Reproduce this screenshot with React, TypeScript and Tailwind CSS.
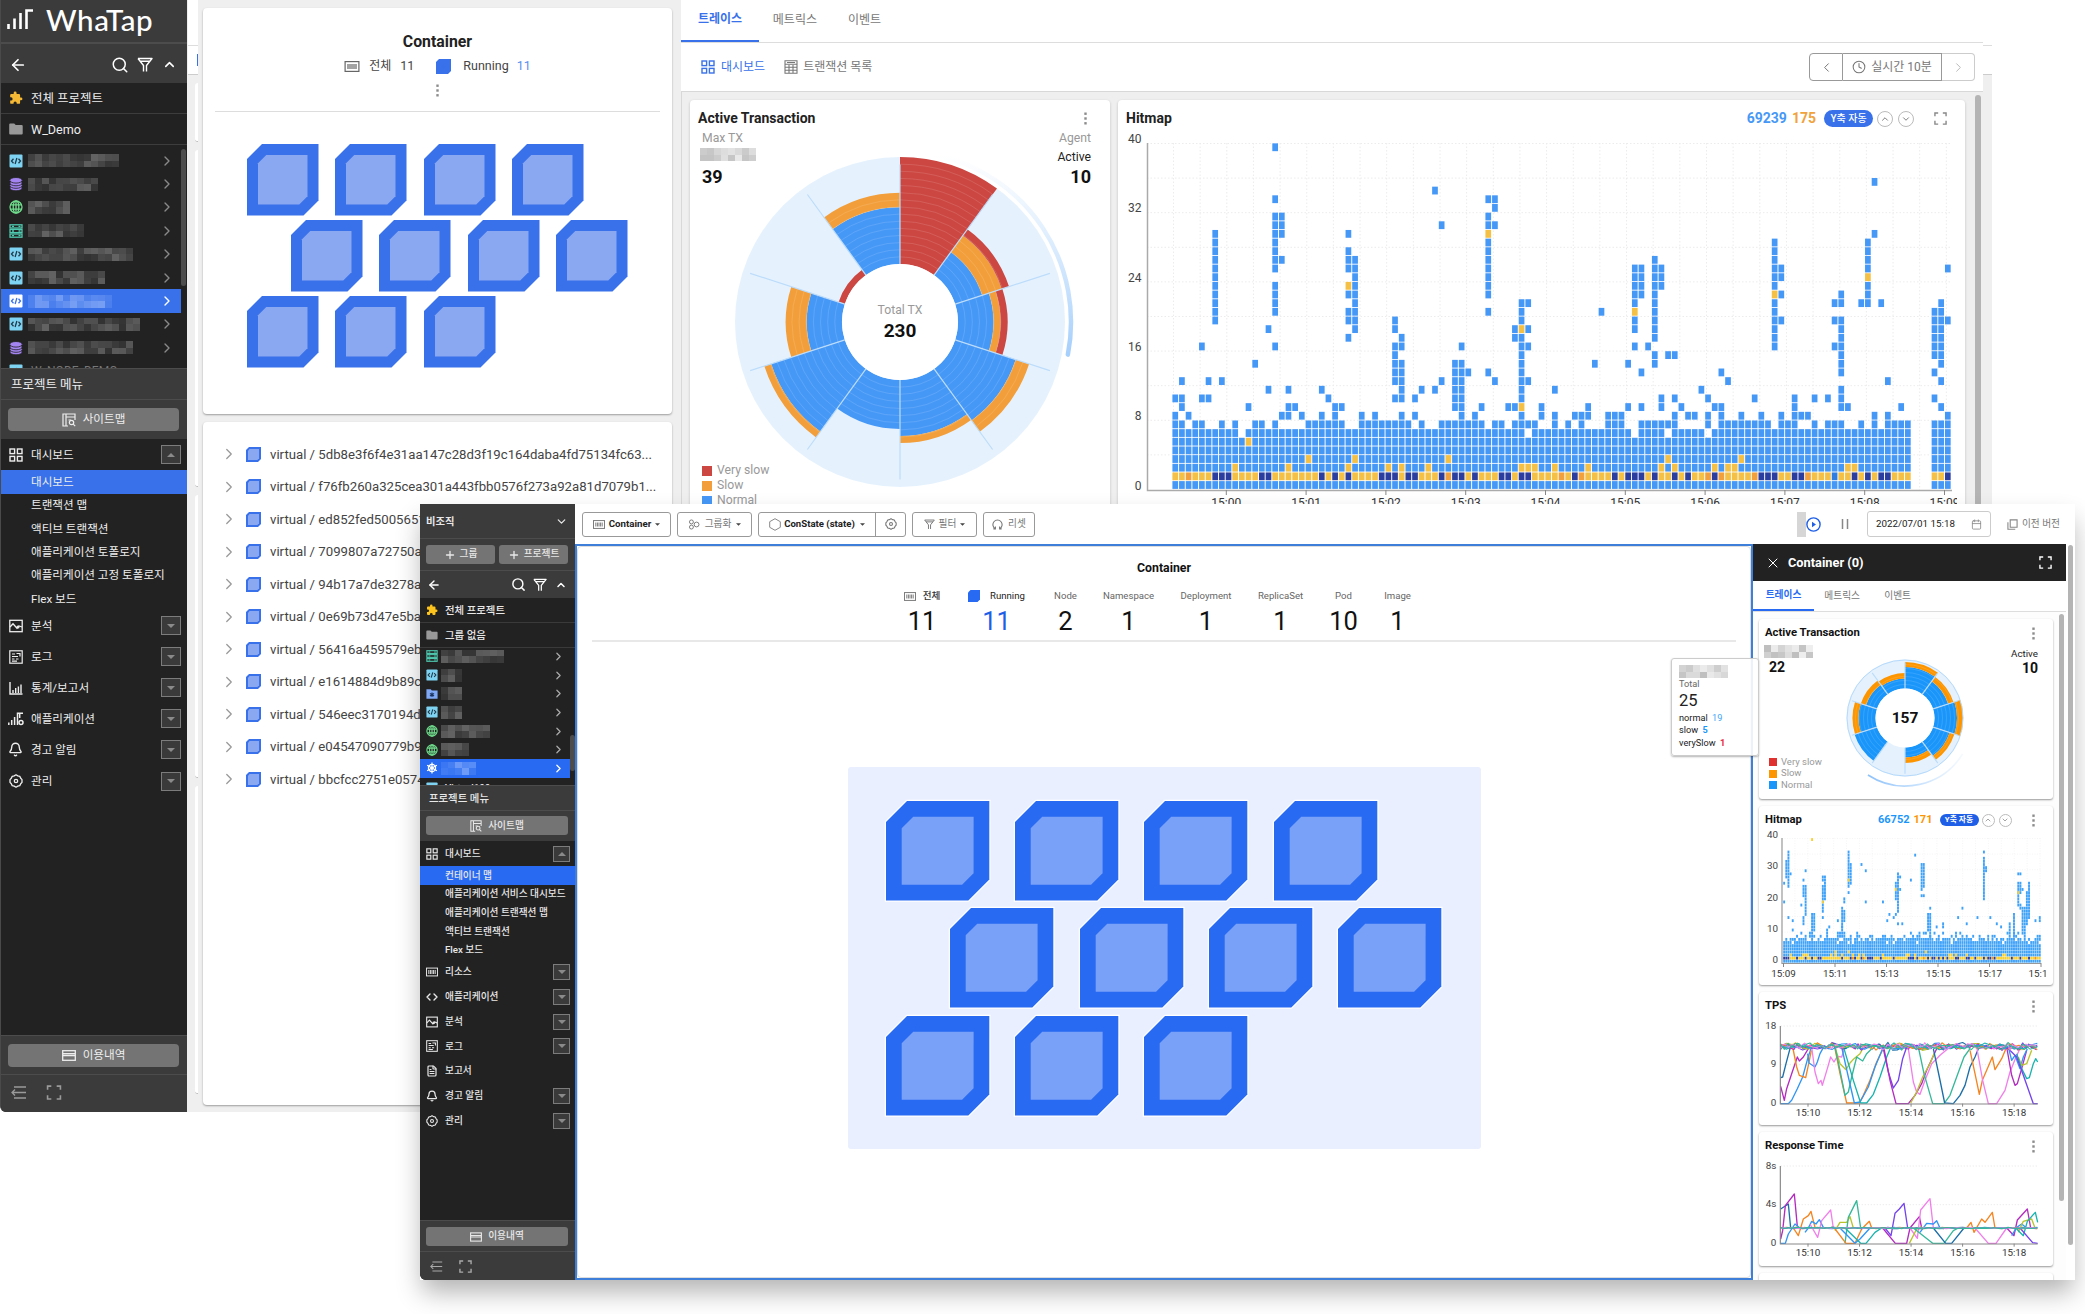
import React from "react";
import {
  ArrowLeft, Search, ChevronUp, ChevronDown, ChevronLeft, ChevronRight, Bell, Clock,
  Calendar, Plus, X, Code, FileText,
} from "lucide-react";

/* ---------- icons ---------- */

type IconProps = { className?: string };

const Funnel = ({ className }: IconProps) => (
  <svg className={className} viewBox="0 0 16 16" fill="none" stroke="currentColor" strokeWidth="1.4" strokeLinejoin="round">
    <path d="M1 1.500h14L9.500 8.500v6M6.500 14.500v-6L1 1.500M3 4.200h10" />
  </svg>
);
const Puzzle = ({ className }: IconProps) => (
  <svg className={className} viewBox="0 0 24 24" fill="currentColor">
    <path d="M20.5 11H19V7a2 2 0 0 0-2-2h-4V3.500a2.500 2.500 0 0 0-5 0V5H4a2 2 0 0 0-2 2v3.800h1.500a2.700 2.700 0 0 1 0 5.400H2V20a2 2 0 0 0 2 2h3.800v-1.500a2.700 2.700 0 0 1 5.400 0V22H17a2 2 0 0 0 2-2v-4h1.500a2.500 2.500 0 0 0 0-5z" />
  </svg>
);
const FolderSolid = ({ className }: IconProps) => (
  <svg className={className} viewBox="0 0 14 12" fill="currentColor">
    <path d="M1.200 0.500h4l1.500 1.500h6a1 1 0 0 1 1 1v7.500a1 1 0 0 1-1 1H1.200a1 1 0 0 1-1-1v-9a1 1 0 0 1 1-1z" />
  </svg>
);
const CodeBox = ({ className, color, ink }: IconProps & { color: string; ink: string }) => (
  <svg className={className} viewBox="0 0 14 14">
    <rect x="0.500" y="0.500" width="13" height="13" rx="1" fill={color} />
    <path d="M4.500 4.800L2.500 7l2 2.200M9.500 4.800l2 2.200-2 2.200M7.900 4L6.100 10" stroke={ink} strokeWidth="1.300" fill="none" />
  </svg>
);
const Database = ({ className }: IconProps) => (
  <svg className={className} viewBox="0 0 14 14">
    <g fill="#a384f0" stroke="#222" strokeWidth="0.800">
      <ellipse cx="7" cy="11" rx="6.200" ry="2.800" />
      <ellipse cx="7" cy="8.500" rx="6.200" ry="2.800" />
      <ellipse cx="7" cy="6" rx="6.200" ry="2.800" />
      <ellipse cx="7" cy="3.300" rx="6.200" ry="2.800" />
    </g>
  </svg>
);
const Globe = ({ className }: IconProps) => (
  <svg className={className} viewBox="0 0 14 14" fill="none" stroke="#6fdc8c" strokeWidth="1.300">
    <circle cx="7" cy="7" r="6" />
    <ellipse cx="7" cy="7" rx="2.800" ry="6" />
    <path d="M1.500 4.800h11M1.500 9.200h11M7 1v12" />
  </svg>
);
const Server = ({ className }: IconProps) => (
  <svg className={className} viewBox="0 0 14 14" fill="none" stroke="#4fc9b0" strokeWidth="1.300">
    <rect x="1" y="0.800" width="12" height="3.200" />
    <rect x="1" y="5.400" width="12" height="3.200" />
    <rect x="1" y="10" width="12" height="3.200" />
    <path d="M3 2.400h2M3 7h2M3 11.600h2M9.500 2.400h2M9.500 7h2M9.500 11.600h2" />
  </svg>
);
const FolderStar = ({ className }: IconProps) => (
  <svg className={className} viewBox="0 0 14 14">
    <path d="M0.500 1.500h5l1.300 1.500H13.500V12.500H0.500z" fill="#7fa8f5" />
    <path d="M7 5.200v5.400M4.600 6.500l4.800 2.800M9.400 6.500L4.600 9.300" stroke="#1c3460" strokeWidth="1.300" />
  </svg>
);
const Helm = ({ className }: IconProps) => (
  <svg className={className} viewBox="0 0 14 14" fill="none" stroke="#fff" strokeWidth="1.400">
    <circle cx="7" cy="7" r="4.200" />
    <path d="M7 0.500v13M1.300 3.700l11.400 6.600M12.700 3.700L1.300 10.300" />
    <circle cx="7" cy="7" r="1.200" fill="#fff" />
  </svg>
);
const Grid4 = ({ className }: IconProps) => (
  <svg className={className} viewBox="0 0 14 14" fill="none" stroke="currentColor" strokeWidth="1.400">
    <rect x="1" y="1" width="4.600" height="4.600" />
    <rect x="8.400" y="1" width="4.600" height="4.600" />
    <rect x="1" y="8.400" width="4.600" height="4.600" />
    <rect x="8.400" y="8.400" width="4.600" height="4.600" />
  </svg>
);
const TableIcon = ({ className }: IconProps) => (
  <svg className={className} viewBox="0 0 14 14" fill="none" stroke="currentColor" strokeWidth="1.100">
    <path d="M1 0.800h12v12.400H1zM1 4.300h12M3 2.500h8M1 7.300h12M1 10.200h12M5 5v8M9 5v8" />
  </svg>
);
const Analysis = ({ className }: IconProps) => (
  <svg className={className} viewBox="0 0 14 14" fill="none" stroke="currentColor" strokeWidth="1.300">
    <rect x="0.800" y="1.300" width="12.400" height="11.400" />
    <path d="M1 8l3-3.300 4 4.500 2-2.200 3 1" />
    <circle cx="9" cy="8" r="0.900" />
  </svg>
);
const LogIcon = ({ className }: IconProps) => (
  <svg className={className} viewBox="0 0 14 14" fill="none" stroke="currentColor" strokeWidth="1.200">
    <rect x="0.800" y="0.800" width="12.400" height="12.400" />
    <path d="M3 4h3M7.500 3.500h3.500v3M3 6.500h6M3 9h2.500M7 9h2.500M3 11.200h5" />
  </svg>
);
const StatsIcon = ({ className }: IconProps) => (
  <svg className={className} viewBox="0 0 14 14" fill="none" stroke="currentColor" strokeWidth="1.400">
    <path d="M1 1v12h12.500M4 12V9M6.700 12V7M9.400 12V5.500M12 12V3.500" />
  </svg>
);
const AppIcon = ({ className }: IconProps) => (
  <svg className={className} viewBox="0 0 16 14" fill="none" stroke="currentColor" strokeWidth="1.500">
    <path d="M0.800 13v-2.500M3.700 13V8M6.600 13V5M9.500 13V1.200H15M11.700 1v5" />
    <circle cx="13" cy="10.500" r="2" />
  </svg>
);
const HexGear = ({ className }: IconProps) => (
  <svg className={className} viewBox="0 0 14 14" fill="none" stroke="currentColor" strokeWidth="1.300" strokeLinejoin="round">
    <path d="M5.200 1.900L7 0.800l1.800 1.100 2 .5.900 1.800 1.300 1.400v2.800l-1.300 1.400-.9 1.800-2 .5L7 13.200l-1.800-1.100-2-.5-.9-1.800L1 8.400V5.600l1.300-1.400.9-1.800z" />
    <circle cx="7" cy="7" r="1.700" />
  </svg>
);
const ContainerIcon = ({ className }: IconProps) => (
  <svg className={className} viewBox="0 0 15 11" fill="none" stroke="currentColor" strokeWidth="1.200">
    <rect x="0.600" y="0.600" width="13.800" height="9.800" />
    <path d="M3.500 3v5M5.500 3v5M7.500 3v5M9.500 3v5M11.500 3v5" />
  </svg>
);
const SitemapIcon = ({ className }: IconProps) => (
  <svg className={className} viewBox="0 0 14 14" fill="none" stroke="currentColor" strokeWidth="1.200">
    <path d="M13 7V1H1v12h5M4 1v12M4 4h9M6.500 7H9" />
    <circle cx="9.500" cy="9.500" r="2.200" />
    <path d="M11.200 11.200l2 2" />
  </svg>
);
const CardIcon = ({ className }: IconProps) => (
  <svg className={className} viewBox="0 0 14 11" fill="none" stroke="currentColor" strokeWidth="1.300">
    <rect x="0.700" y="0.700" width="12.600" height="9.600" />
    <path d="M1 3.700h12M1 5.500h12" />
  </svg>
);
const Collapse = ({ className }: IconProps) => (
  <svg className={className} viewBox="0 0 16 13" fill="none" stroke="currentColor" strokeWidth="1.300">
    <path d="M3 1h12M1 6.500h14M3 12h12M4 3.500l-3 3 3 3" />
  </svg>
);
const Expand = ({ className }: IconProps) => (
  <svg className={className} viewBox="0 0 14 14" fill="none" stroke="currentColor" strokeWidth="1.500">
    <path d="M1 4.500V1h3.500M9.500 1H13v3.500M13 9.500V13H9.500M4.500 13H1V9.500" />
  </svg>
);
const GroupIcon = ({ className }: IconProps) => (
  <svg className={className} viewBox="0 0 14 12" fill="none" stroke="currentColor" strokeWidth="1.100">
    <circle cx="4" cy="3" r="2.300" />
    <circle cx="4" cy="9" r="2.300" />
    <circle cx="10" cy="6" r="2.800" />
  </svg>
);
const Dots = ({ className = "" }: IconProps) => (
  <svg className={`h-[13px] w-[3px] shrink-0 text-[#8c8c8c] ${className}`} viewBox="0 0 3 13" fill="currentColor">
    <rect y="0.500" x="0.300" width="2.400" height="2.400" />
    <rect y="5.300" x="0.300" width="2.400" height="2.400" />
    <rect y="10.100" x="0.300" width="2.400" height="2.400" />
  </svg>
);

/* ---------- shared pieces ---------- */

/* Label set slightly below the optical centre of its row */
const Low = ({ children }: { children: React.ReactNode }) => <span className="pt-[2px]">{children}</span>;

function Cube({ className, w, h, cut, inset, fill, inner, halo }: {
  className?: string; w: number; h: number; cut: number; inset: number; fill: string; inner: string; halo?: boolean;
}) {
  const c2 = cut * 0.55;
  const shape = (x: number, y: number, x2: number, y2: number, c: number) =>
    `M${x + c} ${y}H${x2}V${y2 - c}L${x2 - c} ${y2}H${x}V${y + c}Z`;
  return (
    <svg className={`shrink-0 ${className}`} viewBox={`0 0 ${w} ${h}`} overflow="visible">
      {halo && <path d={shape(0, 0, w, h, cut)} stroke="#fff" strokeWidth="2.500" fill="none" />}
      <path d={shape(0, 0, w, h, cut)} fill={fill} />
      <path d={shape(inset, inset, w - inset, h - inset, c2)} fill={inner} />
    </svg>
  );
}

const noise = (n: number) => {
  const v = Math.sin(n * 127.1 + 11.7) * 43758.5453;
  return v - Math.floor(v);
};

/* Pixelated placeholder for a redacted label */
function Mosaic({ cells, seed, tone }: { cells: number; seed: number; tone: "dark" | "blue" | "light" }) {
  const rgb = tone === "dark" ? "170,170,170" : tone === "blue" ? "190,210,255" : "120,120,120";
  return (
    <span className="grid grid-flow-col grid-rows-2 auto-cols-[7px]">
      {Array.from({ length: cells * 2 }, (_, i) => (
        <span
          key={i}
          className="h-[6.500px] w-[7px]"
          style={{ backgroundColor: `rgba(${rgb},${(0.12 + noise(i + seed * 31) * 0.36).toFixed(2)})` }}
        />
      ))}
    </span>
  );
}

function Toggle({ up, small }: { up?: boolean; small?: boolean }) {
  return (
    <span className={`flex items-center justify-center border border-[#7c7c7c] bg-[#3a3a3a] ${small ? "h-4 w-[17px]" : "h-[19px] w-5"}`}>
      <svg className="h-1 w-2" viewBox="0 0 8 4" fill="#8a8a8a">
        <path d={up ? "M0 4L4 0l4 4z" : "M0 0h8L4 4z"} />
      </svg>
    </span>
  );
}

const kindIcon: Record<string, React.ReactNode> = {
  code: <CodeBox className="h-full w-full" color="#7fd3f2" ink="#1f3a4a" />,
  codeSel: <CodeBox className="h-full w-full" color="#ffffff" ink="#3871ea" />,
  db: <Database className="h-full w-full" />,
  web: <Globe className="h-full w-full" />,
  server: <Server className="h-full w-full" />,
  folder: <FolderStar className="h-full w-full" />,
  helm: <Helm className="h-full w-full" />,
};

/* ---------- back window sidebar ---------- */

const backProjects: [string, number][] = [
  ["code", 13], ["db", 10], ["web", 6], ["server", 8], ["code", 15], ["code", 11], ["codeSel", 12], ["code", 16], ["db", 15],
];
const backMenu: [React.ReactNode, string][] = [
  [<Analysis className="h-[14px] w-[14px]" />, "분석"],
  [<LogIcon className="h-[14px] w-[14px]" />, "로그"],
  [<StatsIcon className="h-[14px] w-[14px]" />, "통계/보고서"],
  [<AppIcon className="h-[14px] w-4" />, "애플리케이션"],
  [<Bell className="h-[15px] w-[15px]" strokeWidth={2.200} />, "경고 알림"],
  [<HexGear className="h-[14px] w-[14px]" />, "관리"],
];

function BackSidebar() {
  return (
    <aside className="flex h-[1112px] w-[187px] shrink-0 flex-col overflow-hidden rounded-bl-md border-l border-[#4a4a4a] bg-[#222] text-[#eee]">
      <div className="flex h-[44px] shrink-0 items-center border-b-2 border-[#4c4c4c] bg-[#3b3b3b] pl-[6px]">
        <svg className="mt-[-4px] h-[20px] w-[26px] shrink-0" viewBox="0 0 26 20" fill="none" stroke="#fff" strokeWidth="2.600">
          <path d="M1.500 20v-5M7.500 20V9.500M13.500 20V4M19.500 20V1.500H26" />
        </svg>
        <span className="ml-[13px] mt-[-2px] font-[Lato] text-[29.500px] font-medium leading-none tracking-[0.600px] text-white">WhaTap</span>
      </div>
      <div className="flex h-[39px] shrink-0 items-center bg-[#3b3b3b] pl-[8px] pr-[10px] pt-[2px] text-white">
        <ArrowLeft className="h-[18px] w-[18px]" strokeWidth={2.300} />
        <Search className="ml-auto h-[18px] w-[18px]" />
        <Funnel className="ml-[8px] h-4 w-4" />
        <ChevronUp className="ml-[9px] h-[15px] w-[15px]" strokeWidth={2.500} />
      </div>
      <div className="flex h-[31px] shrink-0 items-center gap-[8px] border-b border-[#3d3d3d] pl-2 text-[12.500px]">
        <Puzzle className="h-[14px] w-[14px] text-[#f5b935]" /><Low>전체 프로젝트</Low>
      </div>
      <div className="flex h-[31px] shrink-0 items-center gap-[8px] border-b border-[#3d3d3d] pl-2 text-[12.600px]">
        <FolderSolid className="h-3 w-[14px] text-[#999]" /><Low>W_Demo</Low>
      </div>
      <div className="flex h-[223px] shrink-0 overflow-hidden pt-[4px]">
        <div className="w-[180px]">
          {backProjects.map(([kind, n], i) => (
            <div key={i} className={`flex h-[23.400px] items-center pl-2 pr-[6px] ${kind === "codeSel" ? "bg-[#3871ea]" : ""}`}>
              <span className="mr-[5px] h-[14px] w-[14px]">{kindIcon[kind]}</span>
              <Mosaic cells={n} seed={i + 1} tone={kind === "codeSel" ? "blue" : "dark"} />
              <ChevronRight className={`ml-auto h-4 w-4 ${kind === "codeSel" ? "text-white" : "text-[#8a8a8a]"}`} />
            </div>
          ))}
          <div className="flex h-[23px] items-start pl-2 pt-[4px] text-[12px] text-[#777]">
            <span className="mr-[8px] h-[14px] w-[14px]">{kindIcon.code}</span>
            <span className="leading-[14px]">W_NODE_DEMO</span>
          </div>
        </div>
        <div className="h-[137px] w-[5px] rounded-full bg-[#4d4d4d]" />
      </div>
      <div className="flex h-[32px] shrink-0 items-center border-b border-t border-[#4c4c4c] bg-[#3b3b3b] pl-[10px] text-[12.500px]"><span className="pt-[3px]">프로젝트 메뉴</span></div>
      <div className="shrink-0 bg-[#3b3b3b] px-[7px] py-[8px]">
        <div className="flex h-[23px] w-[171px] items-center justify-center gap-[7px] rounded bg-[#747474] text-[11.600px]">
          <SitemapIcon className="h-[14px] w-[14px]" />사이트맵
        </div>
      </div>
      <div className="flex h-[31px] shrink-0 items-center pl-2 pr-[6px] text-[11.600px]">
        <Grid4 className="mr-[8px] h-[14px] w-[14px]" /><Low>대시보드</Low><span className="ml-auto"><Toggle up /></span>
      </div>
      <div className="flex h-[23.500px] shrink-0 items-center bg-[#3871ea] pl-[30px] text-[11.600px]"><span className="pt-px">대시보드</span></div>
      {["트랜잭션 맵", "액티브 트랜잭션", "애플리케이션 토폴로지", "애플리케이션 고정 토폴로지", "Flex 보드"].map((t) => (
        <div key={t} className="flex h-[23.300px] shrink-0 items-center whitespace-nowrap pl-[30px] text-[11.600px]"><Low>{t}</Low></div>
      ))}
      {backMenu.map(([icon, t], i) => (
        <div key={i} className="flex h-[31.100px] shrink-0 items-center pl-[6px] pr-[6px] text-[11.600px]">
          <span className="mr-[7px] flex w-[17px] justify-center">{icon}</span><Low>{t}</Low><span className="ml-auto"><Toggle /></span>
        </div>
      ))}
      <div className="mt-auto shrink-0 border-b border-t border-[#4c4c4c] bg-[#3b3b3b] px-[7px] pb-[7px] pt-[8px]">
        <div className="flex h-[23px] w-[171px] items-center justify-center gap-[7px] rounded bg-[#747474] text-[11.600px]">
          <CardIcon className="h-[11px] w-[14px]" />이용내역
        </div>
      </div>
      <div className="flex h-[37px] shrink-0 items-center gap-[19px] bg-[#3b3b3b] pl-[10px] pb-[3px] text-[#9a9a9a]">
        <Collapse className="h-[13px] w-4" /><Expand className="h-[15px] w-4" />
      </div>
    </aside>
  );
}

/* ---------- container column of the back window ---------- */

const ids = [
  "5db8e3f6f4e31aa147c28d3f19c164daba4fd75134fc63...",
  "f76fb260a325cea301a443fbb0576f273a92a81d7079b1...",
  "ed852fed5005651", "7099807a72750a", "94b17a7de3278a", "0e69b73d47e5ba", "56416a459579eb",
  "e1614884d9b89c", "546eec3170194d", "e04547090779b9", "bbcfcc2751e0574",
];

function ContainerColumn() {
  return (
    <section className="flex h-[1112px] w-[483px] shrink-0 flex-col gap-2 bg-[#efefef] pl-[5px] pr-[9px] pt-2">
      <div className="flex h-[406px] shrink-0 flex-col items-center rounded bg-white px-3 shadow-[0_1px_2px_rgba(0,0,0,0.350)]">
        <h2 className="mt-[24px] text-[15.800px] font-bold leading-5 text-[#222]">Container</h2>
        <div className="mt-[3px] flex h-[22px] items-center text-[12.500px] text-[#444]">
          <ContainerIcon className="h-[11px] w-4 text-[#666]" />
          <span className="ml-[9px] text-[12px]">전체</span>
          <span className="ml-[9px]">11</span>
          <Cube className="ml-[22px] h-[15px] w-[15px]" w={15} h={15} cut={3} inset={7.5} fill="#3871ea" inner="#3871ea" />
          <span className="ml-[12px]">Running</span>
          <span className="ml-[8px] text-[#5a8df0]">11</span>
        </div>
        <Dots className="mt-[7px]" />
        <div className="mt-[14px] h-px w-full bg-[#ddd]" />
        <div className="mt-[32px] flex w-full flex-col gap-[4.500px] pl-8">
          {[4, 4, 3].map((n, r) => (
            <div key={r} className={`flex gap-[16.800px] ${r === 1 ? "pl-11" : ""}`}>
              {Array.from({ length: n }, (_, i) => (
                <Cube key={i} className="h-[71.500px] w-[71.500px]" w={71.5} h={71.5} cut={15} inset={11} fill="#3871ea" inner="#8aa8f1" />
              ))}
            </div>
          ))}
        </div>
      </div>
      <div className="h-[683px] shrink-0 rounded bg-white pt-4 shadow-[0_1px_2px_rgba(0,0,0,0.350)]">
        {ids.map((id) => (
          <div key={id} className="flex h-[32.500px] items-center whitespace-nowrap pl-[17px] text-[13.200px] text-[#444]">
            <ChevronRight className="h-[18px] w-[18px] shrink-0 text-[#999]" strokeWidth={1.700} />
            <Cube className="ml-[8px] mr-[9px] h-[15px] w-[15px]" w={15} h={15} cut={3} inset={2} fill="#3871ea" inner="#8aa8f1" />
            <span className="pt-px">virtual / {id}</span>
          </div>
        ))}
      </div>
    </section>
  );
}

/* ---------- radial chart ---------- */

type Ring = [number, string];
function arcPoint(r: number, a: number) {
  const t = ((a - 90) * Math.PI) / 180;
  return `${(r * Math.cos(t)).toFixed(2)} ${(r * Math.sin(t)).toFixed(2)}`;
}
const sector = (r0: number, r1: number, a0: number, a1: number) =>
  `M${arcPoint(r0, a0)}L${arcPoint(r1, a0)}A${r1} ${r1} 0 0 1 ${arcPoint(r1, a1)}L${arcPoint(r0, a1)}A${r0} ${r0} 0 0 0 ${arcPoint(r0, a0)}Z`;
const arc = (r: number, a0: number, a1: number) => `M${arcPoint(r, a0)}A${r} ${r} 0 0 1 ${arcPoint(r, a1)}`;

function Radial({ className, size, hole, outer, step, data, children }: {
  className: string; size: number; hole: number; outer: number; step: number; data: Ring[][]; children?: React.ReactNode;
}) {
  const rings: number[] = [];
  for (let r = hole + step; r < outer - 1; r += step) rings.push(r);
  return (
    <svg className={className} viewBox={`${-size / 2} ${-size / 2} ${size} ${size}`}>
      <circle r={outer} fill="#e5f2fe" />
      {data.map((segs, i) => {
        let from = hole;
        return segs.map(([to, color], k) => {
          const d = sector(from, to, i * 36, i * 36 + 36);
          from = to;
          return <path key={`${i}-${k}`} d={d} fill={color} />;
        });
      })}
      {data.map((segs, i) => {
        const max = segs.length ? segs[segs.length - 1][0] : 0;
        return rings.filter((r) => r < max - 1).map((r) => (
          <path key={`${i}-${r}`} d={arc(r, i * 36, i * 36 + 36)} fill="none" stroke="#fff" strokeOpacity="0.180" strokeWidth="0.700" />
        ));
      })}
      {data.map((_, i) => (
        <line key={i} x1="0" y1={-hole} x2="0" y2={-(outer * 0.955)} stroke="#bcdcfa" strokeWidth="1.200" transform={`rotate(${i * 36})`} />
      ))}
      <circle r={hole} fill="#fff" />
      {children}
    </svg>
  );
}

const R = "#cc4742", O = "#f29f3b", B = "#4698f7";
const backRadial: Ring[][] = [
  [[165, R]],
  [[86.5, B], [107, O], [114.6, R]],
  [[93.5, B], [100.5, O], [107.6, R]],
  [[121.7, B], [135.7, O]],
  [[114, B], [121, O]],
  [[107, B]],
  [[135.5, B], [142.7, O]],
  [[93.3, B], [114.3, O]],
  [[64.5, R]],
  [[114.7, B], [129.3, O]],
];
const B2 = "#1a96fb", O2 = "#fd9500";
const frontRadial: Ring[][] = [
  [[51, B2], [56, O2]],
  [[45.5, B2], [51, O2]],
  [[52, B2], [58, O2]],
  [[47, B2], [52, O2]],
  [[39.5, B2], [45, O2]],
  [],
  [[53, B2]],
  [[46.5, B2], [52.5, O2]],
  [[41, B2], [46.5, O2]],
  [[39.5, B2], [45, O2]],
];

function Legend({ small }: { small?: boolean }) {
  const rows = small
    ? [["bg-[#e03131]", "Very slow"], ["bg-[#fd9500]", "Slow"], ["bg-[#1a96fb]", "Normal"]]
    : [["bg-[#cc4742]", "Very slow"], ["bg-[#f29f3b]", "Slow"], ["bg-[#4698f7]", "Normal"]];
  return (
    <div className="flex flex-col">
      {rows.map(([c, t]) => (
        <div key={t} className={small ? "flex h-[11.700px] items-center gap-1 text-[9.500px] text-[#999]" : "flex h-[15px] items-center gap-[5px] text-[12.200px] text-[#999]"}>
          <span className={`${c} ${small ? "h-2 w-2" : "h-[10px] w-[10px]"}`} />{t}
        </div>
      ))}
    </div>
  );
}

/* ---------- hitmaps ---------- */

const hits: Record<number, number[]> = {
  0: [10, 8], 1: [12, 10, 9], 2: [8], 4: [16, 10], 5: [12, 10], 6: [19, 20, 21, 22, 23, 24, 25, 26, 27, 28, 29], 7: [12],
  11: [9], 12: [14], 14: [18, 11], 15: [39, 33, 31, 30, 29, 28, 27, 26, 25, 23, 22, 21, 20, 16], 16: [31, 30, 29, 26, 8],
  17: [11, 9, 8], 18: [9], 19: [8], 22: [11, 8], 23: [10], 24: [9, 8], 25: [9], 26: [29, 27, 26, 25, 23, 22, 20, 19, 17],
  27: [26, 25, 24, 23, 22, 21, 20, 19, 18], 28: [8], 30: [8], 33: [19, 18, 16, 15, 14, 13, 12, 10], 34: [17, 16, 14, 13, 12, 11, 10, 8],
  36: [10, 8], 37: [11], 39: [34, 11], 40: [30, 12], 42: [14, 13, 12, 11, 10, 9], 43: [16, 14, 13, 12, 11, 10, 9, 8], 44: [13], 45: [8],
  46: [9], 47: [33, 31, 30, 29, 28, 27, 26, 25, 24, 23, 22, 20, 13], 48: [33, 32, 30, 12], 50: [9], 51: [18, 17, 9],
  52: [21, 20, 19, 18, 17, 16, 15, 14, 13, 12, 11, 10, 9, 8], 53: [21, 18, 16, 12], 55: [9, 8], 57: [11, 8], 60: [8], 61: [8], 62: [9, 8],
  63: [14], 64: [20], 65: [8], 66: [8], 67: [8], 68: [14, 9], 69: [25, 24, 23, 22, 21, 20, 19, 18, 16], 70: [25, 24, 23, 22, 13, 9], 71: [16],
  72: [26, 25, 24, 23, 22, 21, 20, 19, 18, 17, 15, 14], 73: [25, 24, 23, 10, 9], 74: [15], 75: [15, 10, 8], 76: [9], 77: [8], 78: [8],
  79: [11], 80: [10, 8], 81: [9], 82: [13, 9, 8], 83: [12], 85: [8], 87: [10], 88: [8],
  90: [28, 27, 26, 25, 24, 23, 22, 21, 20, 19, 18, 17, 16], 91: [25, 24, 22, 19, 8], 93: [10, 9, 8], 94: [8], 95: [8], 96: [10], 98: [10],
  99: [21, 19, 16], 100: [22, 21, 19, 18, 17, 16, 15, 14, 13, 11, 10, 9], 101: [9], 103: [21], 104: [28, 27, 26, 25, 24, 23, 22, 21],
  105: [35, 29, 8], 106: [21], 107: [12, 8], 109: [9], 114: [20, 19, 18, 17, 16, 15, 13, 10], 115: [21, 20, 19, 18, 17, 16, 15, 14, 12, 9],
  116: [25, 19, 8],
};
const span = (a: number, b: number) => Array.from({ length: b - a + 1 }, (_, i) => a + i);
const row7 = new Set([0, 1, 3, 4, 7, 9, 12, 13, 15, ...span(20, 25), ...span(28, 35), 37, ...span(40, 46), 48, 49, ...span(51, 54), 57, 59, 61,
  65, 66, 67, ...span(70, 75), 80, ...span(82, 89), 91, 92, 93, 96, 98, 99, 100, 103, 105, 107, 108, 109, 110, 114, 115, 116]);
const row6Gap = new Set([10, 53, 69, 74, 80]);
const amber = new Set(["11,5", "20,3", "27,3", "41,3", "74,3", "85,3", "9,2", "17,2", "26,2", "32,2", "34,2", "38,2", "52,2", "53,2", "54,2", "57,2",
  "62,2", "73,2", "75,2", "81,2", "83,2", "84,2", "101,2", "102,2", "26,23", "47,29", "52,18", "52,9", "69,20", "90,22", "104,24"]);
const navy = new Set([6, 7, 8, 13, 14, 22, 24, 26, 31, 32, 33, 35, 36, 40, 42, 43, 45, 49, 50, 52, 53, 60, 66, 68, 69, 70, 72, 75, 77, 81, 88, 89,
  90, 93, 94, 102, 104, 106, 107, 116]);
const deepOrange = new Set([2, 41, 58, 61, 80, 82, 87, 95]);

function BigHitmap() {
  const cells: [number, number, string][] = [];
  for (const c of [...span(0, 110), 114, 115, 116]) {
    for (let r = 0; r < 8; r++) {
      if (r === 7 && !row7.has(c)) continue;
      if (r === 6 && row6Gap.has(c)) continue;
      let f = amber.has(`${c},${r}`) ? "#f5c046" : "#4698f7";
      if (r === 1) f = navy.has(c) ? "#2b3ea0" : deepOrange.has(c) ? "#f2a03d" : c === 99 ? "#2f7de0" : "#f5c046";
      cells.push([c, r, f]);
    }
    (hits[c] || []).forEach((r) => cells.push([c, r, amber.has(`${c},${r}`) ? "#f5c046" : "#4698f7"]));
  }
  return (
    <svg className="block h-[374px] w-[847px]" viewBox="1118 130 847 374" fontFamily="Roboto" fontSize="12" fill="#444">
      <g stroke="#ececec" strokeDasharray="1.500 2">
        {span(0, 9).map((i) => <line key={i} x1="1147" x2="1952" y1={143.5 + i * 34.6} y2={143.5 + i * 34.6} />)}
        {span(0, 29).map((i) => <line key={i} x1={1173.5 + i * 26.65} x2={1173.5 + i * 26.65} y1="143" y2="490" />)}
      </g>
      {cells.map(([c, r, f], i) => (
        <rect key={i} x={1172.4 + c * 6.66} y={481.1 - r * 8.66} width="5.700" height="7.800" fill={f} />
      ))}
      <path d="M1147.500 143V490.500H1952" fill="none" stroke="#aaa" strokeWidth="1.500" />
      {[40, 32, 24, 16, 8, 0].map((v, i) => <text key={v} x="1141.500" y={142.8 + i * 69.4} textAnchor="end">{v}</text>)}
      {span(0, 9).map((i) => (
        <g key={i}>
          <line x1={1226.3 + i * 79.8} x2={1226.3 + i * 79.8} y1="490" y2="495" stroke="#888" />
          <text x={1226.3 + i * 79.8} y="507.300" textAnchor="middle" fill="#333">{`15:0${i}`}</text>
        </g>
      ))}
      <rect x="1957" y="492" width="8" height="12" fill="#fff" />
    </svg>
  );
}

const spikes: [number, number, number][] = [
  [0, 25, 25], [0, 19, 19], [1, 27, 32], [2, 24, 35], [3, 28, 28], [2, 14, 14], [8, 18, 18], [9, 21, 24], [9, 26, 26], [9, 12, 14], [10, 15, 24], [10, 29, 29],
  [13, 8, 15], [14, 10, 15], [18, 14, 14], [18, 16, 24], [18, 26, 27], [19, 20, 27], [27, 9, 17], [28, 13, 16], [28, 19, 20], [30, 24, 35], [31, 25, 31],
  [30, 22, 22], [36, 31, 31], [38, 29, 29], [38, 19, 19], [46, 19, 19], [49, 15, 15], [51, 14, 14], [52, 20, 25], [52, 15, 15], [53, 16, 28], [54, 23, 23],
  [54, 27, 27], [59, 26, 26], [61, 34, 34], [64, 23, 31], [65, 24, 31], [64, 21, 21], [65, 21, 21], [67, 10, 15], [68, 8, 15], [68, 17, 17], [74, 11, 11],
  [81, 14, 14], [83, 17, 17], [90, 14, 14], [93, 20, 31], [93, 32, 33], [93, 35, 35], [94, 29, 30], [96, 14, 14], [105, 9, 12], [107, 9, 15], [109, 18, 25],
  [109, 28, 28], [110, 17, 18], [110, 22, 25], [110, 28, 28], [111, 9, 17], [111, 23, 23], [112, 9, 17], [113, 12, 22], [114, 14, 25], [117, 13, 13],
  [119, 13, 14], [4, 10, 10], [20, 9, 10], [25, 13, 13], [99, 12, 12],
];

function SmallHitmap() {
  const cells: [number, number, string][] = [];
  for (let c = 0; c < 120; c++) {
    for (let r = 0; r < 7; r++) {
      if (r === 6 && noise(c + 400) < 0.08) continue;
      let f = "#3fa2fa";
      const n = noise(c * 3 + r * 17);
      if (r === 1) f = n < 0.3 ? "#2b3ea0" : n < 0.36 ? "#fd9500" : "#fbcf2e";
      else if (r === 2 && n < 0.17) f = "#fbcf2e";
      else if (r === 3 && n < 0.03) f = "#fbcf2e";
      cells.push([c, r, f]);
    }
    if (noise(c + 77) < 0.7) cells.push([c, 7, "#3fa2fa"]);
    if (noise(c + 177) < 0.35) cells.push([c, 8, "#3fa2fa"]);
    if (noise(c + 277) < 0.17) cells.push([c, 9, "#3fa2fa"]);
    if (noise(c + 377) < 0.08) cells.push([c, 10 + Math.floor(noise(c) * 4), "#3fa2fa"]);
  }
  spikes.forEach(([c, a, b]) => span(a, b).forEach((r) => cells.push([c, r, "#3fa2fa"])));
  [[13, 39], [18, 19], [30, 26], [52, 23], [109, 22]].forEach(([c, r]) => cells.push([c, r, "#fbcf2e"]));
  return (
    <svg className="block h-[155px] w-[294px]" viewBox="1759 829 294 155" fontFamily="Roboto" fontSize="9.800" fill="#444">
      <g stroke="#f0f0f0" strokeDasharray="1 1.500" strokeWidth="0.700">
        {span(0, 7).map((i) => <line key={i} x1="1782" x2="2041" y1={838.5 + i * 15.6} y2={838.5 + i * 15.6} />)}
        {span(1, 20).map((i) => <line key={i} x1={1782 + i * 12.9} x2={1782 + i * 12.9} y1="838" y2="963" />)}
      </g>
      {cells.map(([c, r, f], i) => (
        <rect key={i} x={1783.2 + c * 2.148} y={959.8 - r * 3.12} width="1.900" height="2.850" fill={f} />
      ))}
      <path d="M1782 838V963.500H2041" fill="none" stroke="#999" strokeWidth="1.200" />
      {[40, 30, 20, 10, 0].map((v, i) => <text key={v} x="1778" y={838 + i * 31.3} textAnchor="end">{v}</text>)}
      {["15:09", "15:11", "15:13", "15:15", "15:17", "15:1"].map((t, i) => (
        <g key={t + i}>
          <line x1={1783.5 + i * 51.5} x2={1783.5 + i * 51.5} y1="963" y2="967" stroke="#888" />
          <text x={i === 5 ? 2038 : 1783.5 + i * 51.6} y="977.300" textAnchor="middle" fill="#333">{t}</text>
        </g>
      ))}
    </svg>
  );
}

/* ---------- trace panel (back window) ---------- */

function TracePanel() {
  return (
    <section className="flex h-[504px] w-[1302px] shrink-0 flex-col overflow-hidden bg-white">
      <nav className="flex h-[43px] shrink-0 border-b border-[#ddd] text-[12px] text-[#777]">
        <span className="flex h-[42px] w-[78px] items-center justify-center border-b-2 border-[#3871ea] pb-[2px] font-bold text-[#3871ea]">트레이스</span>
        <span className="flex w-[58px] items-center justify-end pb-[2px]">메트릭스</span>
        <span className="flex w-[64px] items-center justify-end pb-[2px]">이벤트</span>
      </nav>
      <div className="flex h-[48px] shrink-0 items-center pl-5 pr-2 text-[12px] text-[#777]">
        <span className="flex items-center gap-[6px] text-[#3871ea]"><Grid4 className="h-[14px] w-[14px]" />대시보드</span>
        <span className="ml-[19px] flex items-center gap-[5px]"><TableIcon className="h-[14px] w-[14px]" />트랜잭션 목록</span>
        <div className="ml-auto flex h-[28px] items-stretch">
          <span className="flex w-[34px] items-center justify-center rounded-l border border-[#999]"><ChevronLeft className="h-[15px] w-[15px]" strokeWidth={1.600} /></span>
          <span className="flex w-[99px] items-center justify-center gap-[5px] border-y border-r border-[#999]"><Clock className="h-[14px] w-[14px]" strokeWidth={1.800} />실시간 10분</span>
          <span className="flex w-[33px] items-center justify-center rounded-r border border-l-0 border-[#ccc] text-[#bbb]"><ChevronRight className="h-[15px] w-[15px]" strokeWidth={1.600} /></span>
        </div>
      </div>
      <div className="flex flex-1 border-l border-t border-[#d8d8d8] bg-[#efefef] pl-2">
        <div className="mt-2 flex h-[420px] w-[420px] shrink-0 flex-col rounded bg-white shadow-[0_1px_3px_rgba(0,0,0,0.200)]">
          <div className="flex h-[30px] items-center justify-between pl-2 pr-[23px] pt-[7px] text-[14px] font-bold text-[#222]">Active Transaction<Dots /></div>
          <div className="relative flex-1">
            <Radial className="absolute left-[32.500px] top-[15px] h-[354px] w-[354px]" size={354} hole={58} outer={165} step={7.13} data={backRadial}>
              <defs>
                <linearGradient id="arcBack" x1="0" y1="0" x2="0" y2="1">
                  <stop offset="0" stopColor="#b9dafb" stopOpacity="0" />
                  <stop offset="1" stopColor="#a5cffc" />
                </linearGradient>
              </defs>
              <path d={arc(171, 12, 101)} fill="none" stroke="url(#arcBack)" strokeWidth="4.500" strokeLinecap="round" />
              <text y="-8" textAnchor="middle" fontSize="12.200" fill="#999">Total TX</text>
              <text y="14.500" textAnchor="middle" fontSize="19" fontWeight="700" fill="#111">230</text>
            </Radial>
            <div className="relative flex justify-between px-[12px] pr-[19px]">
              <div className="flex flex-col">
                <span className="text-[12.200px] leading-4 text-[#999]">Max TX</span>
                <span className="ml-[-2px] mt-[2px]"><Mosaic cells={8} seed={41} tone="light" /></span>
                <span className="mt-[4px] text-[18px] font-bold leading-6 text-[#111]">39</span>
              </div>
              <div className="flex flex-col items-end">
                <span className="text-[12.200px] leading-4 text-[#999]">Agent</span>
                <span className="mt-[3px] text-[12.200px] leading-4 text-[#222]">Active</span>
                <span className="text-[18px] font-bold leading-6 text-[#111]">10</span>
              </div>
            </div>
            <div className="absolute left-3 top-[333px]"><Legend /></div>
          </div>
        </div>
        <div className="ml-2 mt-2 h-[420px] w-[847px] shrink-0 rounded bg-white shadow-[0_1px_3px_rgba(0,0,0,0.200)]">
          <div className="flex h-[30px] items-center pl-2 pr-[18px] pt-[7px] text-[14px] font-bold text-[#222]">
            Hitmap
            <span className="ml-auto text-[#4698f7]">69239</span>
            <span className="ml-[5px] text-[#f0a23d]">175</span>
            <span className="ml-[8px] flex h-[17px] w-[49px] items-center justify-center rounded-full bg-[#3871ea] text-[10px] font-medium text-white">Y축 자동</span>
            <span className="ml-[4px] flex h-4 w-4 items-center justify-center rounded-full border border-[#bbb]"><ChevronUp className="h-[10px] w-[10px] text-[#666]" /></span>
            <span className="ml-[5px] flex h-4 w-4 items-center justify-center rounded-full border border-[#bbb]"><ChevronDown className="h-[10px] w-[10px] text-[#666]" /></span>
            <Expand className="ml-[20px] h-[13px] w-[13px] text-[#888]" />
          </div>
          <BigHitmap />
        </div>
        <div className="ml-[10px] mt-[3px] h-[420px] w-[6px] rounded-full bg-[#b4b4b4]" />
      </div>
    </section>
  );
}

/* Edge of the page beneath, visible between the columns */
function SliverLeft() {
  return (
    <div className="flex h-[1112px] w-[11px] shrink-0 flex-col bg-[#efefef] pl-px">
      <div className="h-[46px] shrink-0 border-b border-[#ddd] bg-white" />
      <div className="flex h-[29px] shrink-0 items-center justify-end border-b border-[#ccc] bg-white"><span className="h-3 w-px bg-[#3871ea]" /></div>
      {["mt-2 h-[59px]", "mt-2 h-[337px]", "mt-2 h-[283px]", "mt-2 h-[308px]"].map((c) => (
        <div key={c} className={`${c} ml-[7px] shrink-0 rounded-l border-b border-[#bbb] bg-white`} />
      ))}
    </div>
  );
}
function SliverRight() {
  return (
    <div className="flex h-[504px] w-[9px] shrink-0 flex-col bg-[#efefef]">
      <div className="h-[46px] border-b border-[#ddd] bg-white" />
      <div className="h-[29px] border-b border-[#ccc] bg-white" />
    </div>
  );
}

/* ---------- front window ---------- */

const frontProjects: [string, number][] = [["server", 9], ["code", 3], ["folder", 3], ["code", 3], ["web", 7], ["web", 4], ["helm", 5]];
const frontMenu: [React.ReactNode, string, boolean][] = [
  [<ContainerIcon className="h-[10px] w-3" />, "리소스", true],
  [<Code className="h-3 w-3" strokeWidth={2.800} />, "애플리케이션", true],
  [<Analysis className="h-3 w-3" />, "분석", true],
  [<LogIcon className="h-3 w-3" />, "로그", true],
  [<FileText className="h-3 w-3" strokeWidth={2.400} />, "보고서", false],
  [<Bell className="h-3 w-3" strokeWidth={2.500} />, "경고 알림", true],
  [<HexGear className="h-3 w-3" />, "관리", true],
];

function FrontSidebar() {
  return (
    <aside className="flex h-[776px] w-[155px] shrink-0 flex-col overflow-hidden rounded-bl-md bg-[#222] text-[9.700px] font-medium text-[#e8e8e8]">
      <div className="flex h-[35px] shrink-0 items-center justify-between border-b border-[#4c4c4c] bg-[#3b3b3b] pl-[6px] pr-[7px] text-[10.300px] font-bold">
        <Low>비조직</Low><ChevronDown className="h-[13px] w-[13px]" strokeWidth={2.300} />
      </div>
      <div className="flex h-[32px] shrink-0 items-center gap-[4px] border-b border-[#4c4c4c] bg-[#3b3b3b] px-[6px]">
        <span className="flex h-[19px] w-[69px] items-center justify-center gap-[4px] rounded-[3px] bg-[#747474]"><Plus className="h-3 w-3" strokeWidth={2.600} />그룹</span>
        <span className="flex h-[19px] w-[69px] items-center justify-center gap-[4px] rounded-[3px] bg-[#747474]"><Plus className="h-3 w-3" strokeWidth={2.600} />프로젝트</span>
      </div>
      <div className="flex h-[27px] shrink-0 items-center bg-[#3b3b3b] pl-[7px] pr-[8px] text-white">
        <ArrowLeft className="h-[14px] w-[14px]" strokeWidth={2.400} />
        <Search className="ml-auto h-[15px] w-[15px]" strokeWidth={2.300} />
        <Funnel className="ml-[7px] h-[14px] w-[14px]" />
        <ChevronUp className="ml-[8px] h-[12px] w-[12px]" strokeWidth={3} />
      </div>
      <div className="flex h-[25px] shrink-0 items-center gap-[7px] border-b border-[#3a3a3a] pl-[6px] text-[10.400px]">
        <Puzzle className="h-3 w-3 text-[#fcc31c]" /><Low>전체 프로젝트</Low>
      </div>
      <div className="flex h-[25px] shrink-0 items-center gap-[7px] border-b border-[#3a3a3a] pl-[6px] text-[10.400px]">
        <FolderSolid className="h-[10px] w-3 text-[#999]" /><Low>그룹 없음</Low>
      </div>
      <div className="flex h-[137px] shrink-0 overflow-hidden">
        <div className="mt-[-1px] w-[150px]">
          {frontProjects.map(([kind, n], i) => (
            <div key={i} className={`flex h-[18.700px] items-center pl-[6px] pr-[5px] ${kind === "helm" ? "bg-[#286af2]" : ""}`}>
              <span className="mr-[3px] h-3 w-3">{kindIcon[kind]}</span>
              <Mosaic cells={n} seed={i + 20} tone={kind === "helm" ? "blue" : "dark"} />
              <ChevronRight className={`ml-auto h-[13px] w-[13px] ${kind === "helm" ? "text-white" : "text-[#aaa]"}`} strokeWidth={2.300} />
            </div>
          ))}
          <div className="flex items-start pl-[6px] pt-[4px]">
            <span className="mr-[7px] h-3 w-3">{kindIcon.code}</span>
            <span className="leading-3">Virtual100</span>
          </div>
        </div>
        <div className="mt-[87px] h-[36px] w-[5px] rounded-full bg-[#4d4d4d]" />
      </div>
      <div className="flex h-[26px] shrink-0 items-center border-b border-t border-[#4c4c4c] bg-[#3b3b3b] pl-[9px] text-[10.400px]"><Low>프로젝트 메뉴</Low></div>
      <div className="shrink-0 bg-[#3b3b3b] px-[6px] pb-[6px] pt-[5px]">
        <div className="flex h-[19px] w-[142px] items-center justify-center gap-[6px] rounded-[3px] bg-[#747474]"><SitemapIcon className="h-3 w-3" /><span className="pt-px">사이트맵</span></div>
      </div>
      <div className="flex h-[25px] shrink-0 items-center pl-[6px] pr-[5px]">
        <Grid4 className="mr-[7px] h-3 w-3" /><Low>대시보드</Low><span className="ml-auto"><Toggle up small /></span>
      </div>
      <div className="flex h-[18.700px] shrink-0 items-center bg-[#286af2] pl-[25px]"><span className="pt-px">컨테이너 맵</span></div>
      {["애플리케이션 서비스 대시보드", "애플리케이션 트랜잭션 맵", "액티브 트랜잭션", "Flex 보드"].map((t) => (
        <div key={t} className="flex h-[18.700px] shrink-0 items-center whitespace-nowrap pl-[25px]"><span className="pt-px">{t}</span></div>
      ))}
      {frontMenu.map(([icon, t, toggle]) => (
        <div key={t} className="flex h-[24.850px] shrink-0 items-center pl-[6px] pr-[5px]">
          <span className="mr-[7px] flex w-3 justify-center">{icon}</span><span className="pt-px">{t}</span>{toggle && <span className="ml-auto"><Toggle small /></span>}
        </div>
      ))}
      <div className="mt-auto shrink-0 border-b border-t border-[#4c4c4c] bg-[#3b3b3b] px-[6px] pb-[5px] pt-[6px]">
        <div className="flex h-[19px] w-[142px] items-center justify-center gap-[6px] rounded-[3px] bg-[#747474]"><CardIcon className="h-[10px] w-3" />이용내역</div>
      </div>
      <div className="flex h-[28px] shrink-0 items-center gap-[16px] bg-[#3b3b3b] pl-[10px] text-[#aaa]">
        <Collapse className="h-[11px] w-[13px]" /><Expand className="h-[13px] w-[13px]" />
      </div>
    </aside>
  );
}

const Caret = () => (
  <svg className="h-[3px] w-[5px]" viewBox="0 0 6 3" fill="#444"><path d="M0 0h6L3 3z" /></svg>
);

function Toolbar() {
  const box = "flex h-[25px] shrink-0 items-center justify-center rounded-[3px] border border-[#999]";
  return (
    <div className="flex h-[40px] shrink-0 items-center whitespace-nowrap bg-white pl-[7px] pr-[15px] text-[9.700px] text-[#777]">
      <span className={`${box} w-[89px] gap-[4px] font-bold text-[#222]`}><ContainerIcon className="h-[9px] w-3 text-[#777]" />Container<Caret /></span>
      <span className={`${box} ml-[6px] w-[75px] gap-[5px]`}><GroupIcon className="h-[11px] w-[12px]" />그룹화<Caret /></span>
      <span className={`${box} ml-[6px] w-[148px]`}>
        <span className="flex h-full w-[117px] items-center justify-center gap-[3px] border-r border-[#999] text-[9.600px] font-bold text-[#222]">
          <svg className="h-[13px] w-3" viewBox="0 0 12 13" fill="none" stroke="#888"><path d="M6 0.700l5.300 3v5.600L6 12.300l-5.300-3V3.700z" /></svg>
          ConState (state)<span className="ml-[2px]"><Caret /></span>
        </span>
        <span className="flex flex-1 justify-center"><HexGear className="h-3 w-3" /></span>
      </span>
      <span className={`${box} ml-[6px] w-[65px] gap-[4px]`}><Funnel className="h-[11px] w-[11px]" />필터<Caret /></span>
      <span className={`${box} ml-[6px] w-[52px] gap-[5px]`}>
        <svg className="h-[11px] w-[11px]" viewBox="0 0 12 12" fill="none" stroke="currentColor" strokeWidth="1.200"><path d="M3.700 10.600a5 5 0 1 1 4.600 0M3.700 8.300v2.500H1.500M8.300 8.300v2.500h2.200" /></svg>
        리셋
      </span>
      <span className="ml-auto h-[25px] w-[9px] bg-[#d6d6d6]" />
      <svg className="h-[15px] w-[15px]" viewBox="0 0 15 15" fill="none" stroke="#1f5fe8" strokeWidth="1.400">
        <circle cx="7.500" cy="7.500" r="6.600" /><path d="M6 4.800v5.400l4-2.700z" fill="#1f5fe8" stroke="none" />
      </svg>
      <svg className="ml-[20px] h-[10px] w-[8px]" viewBox="0 0 8 10" fill="none" stroke="#888" strokeWidth="1.500"><path d="M1.500 0v10M6.500 0v10" /></svg>
      <span className="ml-[18px] flex h-[26px] w-[124px] items-center justify-between rounded-[3px] border border-[#ccc] px-[8px] text-[9.800px] text-[#222]">
        2022/07/01 15:18<Calendar className="h-[11px] w-[11px] text-[#888]" strokeWidth={1.800} />
      </span>
      <svg className="ml-[16px] h-[11px] w-[11px]" viewBox="0 0 12 12" fill="none" stroke="#888" strokeWidth="1.200"><path d="M3.500 1H11v8H3.500zM1 3.500V11.200h8" /></svg>
      <span className="ml-[4px]">이전 버전</span>
    </div>
  );
}

const stats: [string, string, string][] = [
  ["Node", "2", "w-[46px]"], ["Namespace", "1", "w-[80px]"], ["Deployment", "1", "w-[75px]"],
  ["ReplicaSet", "1", "w-[74px]"], ["Pod", "10", "w-[52px]"], ["Image", "1", "w-[56px]"],
];

function ContainerMap() {
  return (
    <main className="flex h-[736px] w-[1178px] shrink-0 flex-col border-2 border-[#3d7fd9] bg-white">
      <div className="flex flex-1 flex-col items-center rounded border border-[#ddd]">
        <h2 className="mt-[12px] text-[12.300px] font-bold leading-[18px] text-[#111]">Container</h2>
        <div className="mr-[9px] mt-[12px] flex text-[9.600px] leading-[14px] text-[#666]">
          <div className="flex w-[57px] flex-col items-center">
            <span className="flex items-center gap-[7px] font-medium text-[#333]"><ContainerIcon className="h-[9px] w-3 text-[#777]" />전체</span>
            <span className="mt-[3px] text-[25.500px] leading-[31px] text-[#111]">11</span>
          </div>
          <div className="flex w-[92px] flex-col items-center">
            <span className="flex items-center gap-[10px] text-[#222]">
              <Cube className="h-3 w-3" w={12} h={12} cut={2.5} inset={6} fill="#286af2" inner="#286af2" />Running
            </span>
            <span className="mt-[3px] text-[25.500px] leading-[31px] text-[#1f5fe8]">11</span>
          </div>
          {stats.map(([t, n, w]) => (
            <div key={t} className={`flex flex-col items-center ${w}`}>
              <span>{t}</span>
              <span className="mt-[3px] text-[25.500px] leading-[31px] text-[#111]">{n}</span>
            </div>
          ))}
        </div>
        <div className="mt-[3px] h-[2px] w-[1144px] bg-[#e8e8e8]" />
        <div className="mt-[125px] flex h-[382px] w-[633px] flex-col gap-[8.200px] rounded-[3px] bg-[#e9efff] pl-[38px] pt-[33.500px]">
          {[4, 4, 3].map((n, r) => (
            <div key={r} className={`flex gap-[26.100px] ${r === 1 ? "pl-[64.700px]" : ""}`}>
              {Array.from({ length: n }, (_, i) => (
                <Cube key={i} className="h-[99.500px] w-[103.300px]" w={103.3} h={99.5} cut={21} inset={15.7} fill="#286af2" inner="#7aa1f8" halo />
              ))}
            </div>
          ))}
        </div>
      </div>
    </main>
  );
}

/* ---------- line charts ---------- */

const C = { purple: "#7443ee", navy: "#1b6ea8", olive: "#b9c42c", magenta: "#b32bc0", orange: "#f5841f", blue: "#2f95f5", cyan: "#17b3ae", pink: "#f17fea", green: "#35b89a" };

const tpsLines: [string, string][] = [
  [C.blue, "122,940 145,940 155,930 172,895 188,860 203,805 215,768"],
  [C.magenta, "122,888 133,930 140,895 155,850 172,800 178,812 190,800 205,775"],
  [C.navy, "122,862 128,860 138,820 150,775"],
  [C.orange, "158,770 170,830 178,855 197,862 205,825 214,780"],
  [C.blue, "203,790 207,818 225,830 232,815 240,790 252,768"],
  [C.pink, "215,770 225,845 235,880 243,870 247,885 262,835 272,800 282,815 292,798 305,800 315,770"],
  [C.olive, "285,770 300,820 318,838 330,818 342,805 360,790 372,768"],
  [C.orange, "283,765 300,850 320,938 358,938 370,915 390,870 410,815 432,770"],
  [C.green, "285,770 300,840 315,915 325,905 335,860 350,800 368,812 380,790 395,775"],
  [C.blue, "305,770 325,860 343,938 360,935 385,890 405,830 430,770"],
  [C.cyan, "312,775 340,870 362,938 380,938 400,912 420,860 440,800 455,765"],
  [C.purple, "430,775 445,845 460,893 475,870 488,805 500,770"],
  [C.magenta, "432,775 450,870 468,940 505,940 525,915 545,880 560,840 590,775"],
  [C.pink, "505,775 520,875 530,905 540,912 555,870 575,820 600,795 630,770"],
  [C.olive, "512,938 530,905 548,860 570,820 582,790"],
  [C.green, "535,770 552,850 578,940 612,940 630,915 650,860 672,800 690,775"],
  [C.navy, "580,775 598,860 614,938 640,940 660,915 675,885 690,830 705,800 715,775"],
  [C.orange, "690,780 705,850 718,912 727,870 740,840 757,800 765,838 785,805 800,770"],
  [C.pink, "710,770 728,870 745,940 770,940 795,900 810,845 828,800 840,775"],
  [C.magenta, "800,770 815,855 825,885 832,880 845,835 860,780"],
  [C.blue, "805,770 815,810 825,795 840,835 850,800 862,775"],
  [C.olive, "835,800 845,825 860,820 875,780"],
  [C.cyan, "830,790 845,835 860,865 868,862 880,820 887,805 893,815"],
  [C.purple, "800,770 830,800 850,855 880,940 893,940"],
];
const rtLines: [string, string][] = [
  [C.navy, "122,1255 145,1240 152,1312"],
  [C.magenta, "122,1345 128,1320 136,1245 163,1210 172,1308"],
  [C.blue, "122,1358 136,1358 145,1330 165,1300 180,1312"],
  [C.orange, "160,1312 175,1335 190,1285 205,1275 213,1262 225,1310"],
  [C.blue, "195,1325 205,1312 215,1292 228,1300 238,1287 250,1310"],
  [C.pink, "210,1300 233,1340 245,1290 272,1258 280,1312"],
  [C.olive, "285,1320 300,1295 320,1295 330,1278 340,1312"],
  [C.green, "315,1358 325,1280 350,1230 362,1312"],
  [C.orange, "283,1312 318,1358 345,1358 365,1315 388,1292 395,1312"],
  [C.blue, "300,1312 345,1358 360,1345 390,1312"],
  [C.cyan, "315,1312 362,1358 378,1358 405,1325 425,1312"],
  [C.magenta, "428,1312 466,1358 500,1358 510,1312 538,1278 545,1312"],
  [C.purple, "435,1312 453,1335 465,1268 478,1255 492,1238 503,1312"],
  [C.pink, "510,1312 532,1343 542,1258 570,1224 580,1312"],
  [C.olive, "508,1358 530,1315 545,1308"],
  [C.green, "520,1312 578,1358 612,1358 640,1320 655,1312"],
  [C.blue, "540,1325 560,1298 580,1300 590,1290 600,1312"],
  [C.navy, "580,1312 617,1358 635,1358 672,1312"],
  [C.orange, "680,1312 693,1295 702,1325 725,1285 735,1295 757,1265 765,1312"],
  [C.pink, "705,1312 745,1358 768,1358 800,1312"],
  [C.magenta, "800,1312 822,1335 832,1288 862,1255 872,1312"],
  [C.blue, "815,1335 830,1310 845,1300 860,1312"],
  [C.olive, "835,1325 850,1292 875,1285 885,1312"],
  [C.cyan, "825,1310 850,1335 862,1292 886,1265 893,1295"],
  [C.purple, "840,1312 878,1356 893,1358"],
];

/* Steady baseline with a light, uneven drift; the step length varies per series */
function wiggle(seed: number, base: number, amp: number) {
  const step = 8 + (seed % 4) * 3;
  const n = Math.floor(771 / step);
  return span(0, n).map((i) => `${122 + i * step},${(base + (noise(seed * 500 + i) + noise(seed * 900 + i * 2) - 1) * amp * 0.5).toFixed(1)}`).join(" ");
}

function LineChart({ top, labels, lines, base, amp }: { top: number; labels: string[]; lines: [string, string][]; base: number; amp: number }) {
  const bottom = top + 233;
  return (
    <svg className="block h-[108px] w-[294px]" viewBox={`57 ${top - 33} 882 324`} fontFamily="Roboto" fontSize="29.500" fill="#444" strokeLinejoin="round">
      <g stroke="#e3e3e3" strokeDasharray="4 5" strokeWidth="2">
        <line x1="122" x2="895" y1={top} y2={top} /><line x1="122" x2="895" y1={top + 116} y2={top + 116} />
      </g>
      {lines.map(([c, p], i) => <polyline key={i} points={p} fill="none" stroke={c} strokeWidth="4" />)}
      {Object.values(C).map((c, i) => <polyline key={c} points={wiggle(i + 1, base, amp)} fill="none" stroke={c} strokeWidth="3.200" />)}
      <path d={`M121 ${top}V${bottom + 1}H893`} fill="none" stroke="#888" strokeWidth="3.500" />
      {labels.map((l, i) => <text key={l} x="109" y={top + 8 + i * 116.5} textAnchor="end">{l}</text>)}
      {["15:10", "15:12", "15:14", "15:16", "15:18"].map((t, i) => (
        <g key={t}>
          <line x1={204 + i * 154.6} x2={204 + i * 154.6} y1={bottom} y2={bottom + 9} stroke="#888" strokeWidth="3" />
          <text x={204 + i * 154.6} y={bottom + 36} textAnchor="middle" fill="#333">{t}</text>
        </g>
      ))}
    </svg>
  );
}

function CardTitle({ children, extra }: { children: React.ReactNode; extra?: React.ReactNode }) {
  return (
    <div className="flex h-[23px] items-center justify-between pl-[6px] pr-[18.500px] pt-[5px] text-[11.300px] font-bold text-[#111]">
      {children}{extra}<Dots className="h-[10px]" />
    </div>
  );
}

function DetailPanel() {
  const card = "ml-[6px] w-[294px] shrink-0 rounded-[3px] bg-white shadow-[0_1px_2px_rgba(0,0,0,0.400)]";
  return (
    <section className="flex h-[736px] w-[313px] shrink-0 flex-col overflow-hidden bg-[#fdfdfd]">
      <header className="flex h-[37px] shrink-0 items-center bg-[#222] pl-[12px] pr-[14px] text-white">
        <X className="h-4 w-4" strokeWidth={1.500} />
        <span className="ml-[7px] pt-px text-[12.800px] font-bold">Container (0)</span>
        <Expand className="ml-auto h-[13px] w-[13px]" />
      </header>
      <nav className="flex h-[31px] shrink-0 border-b border-[#ddd] bg-white text-[9.700px] text-[#777]">
        <span className="flex h-[30px] w-[61px] items-center justify-center border-b-2 border-[#286af2] pt-px font-bold text-[#286af2]">트레이스</span>
        <span className="flex w-[46px] items-center justify-end">메트릭스</span>
        <span className="flex w-[51px] items-center justify-end">이벤트</span>
      </nav>
      <div className="flex min-h-0 flex-1">
        <div className="flex w-[306px] flex-col gap-[7px] overflow-hidden pt-[7px]">
          <div className={`${card} relative h-[180px]`}>
            <CardTitle>Active Transaction</CardTitle>
            <Radial className="absolute left-[70px] top-[23px] h-[152px] w-[152px]" size={152} hole={29.5} outer={58.5} step={4} data={frontRadial}>
              <defs>
                <linearGradient id="arcFront" x1="1" y1="0" x2="0" y2="0"><stop offset="0" stopColor="#9ccbfb" stopOpacity="0.100" /><stop offset="1" stopColor="#8dc1fa" /></linearGradient>
              </defs>
              <circle r="58" fill="none" stroke="#b5d9fb" strokeWidth="1" />
              <path d={arc(68, 122, 213)} fill="none" stroke="url(#arcFront)" strokeWidth="1.600" />
              <text y="5" textAnchor="middle" fontSize="15.500" fontWeight="700" fill="#111">157</text>
            </Radial>
            <div className="relative flex justify-between pl-[5px] pr-[15px]">
              <div className="flex flex-col pt-[3px]">
                <Mosaic cells={7} seed={52} tone="light" />
                <span className="ml-[5px] pt-px text-[14px] font-bold leading-[17px] text-[#111]">22</span>
              </div>
              <div className="flex flex-col items-end pt-[6px]">
                <span className="text-[9.800px] leading-3 text-[#222]">Active</span>
                <span className="pt-px text-[14px] font-bold leading-[14px] text-[#111]">10</span>
              </div>
            </div>
            <div className="absolute left-[10px] top-[137px]"><Legend small /></div>
          </div>
          <div className={`${card} h-[179px]`}>
            <CardTitle
              extra={
                <span className="ml-auto mr-[20px] flex items-center text-[11px]">
                  <span className="text-[#1a96fb]">66752</span><span className="ml-[4px] text-[#fd9500]">171</span>
                  <span className="ml-[7px] flex h-3 w-[39px] items-center justify-center rounded-full bg-[#1f5fe8] text-[7.800px] text-white">Y축 자동</span>
                  <span className="ml-[3px] flex h-[13px] w-[13px] items-center justify-center rounded-full border border-[#bbb] text-[#777]"><ChevronUp className="h-2 w-2" /></span>
                  <span className="ml-[4px] flex h-[13px] w-[13px] items-center justify-center rounded-full border border-[#bbb] text-[#777]"><ChevronDown className="h-2 w-2" /></span>
                </span>
              }
            >
              Hitmap
            </CardTitle>
            <SmallHitmap />
          </div>
          <div className={`${card} h-[133px]`}>
            <CardTitle>TPS</CardTitle>
            <LineChart top={707} labels={["18", "9", "0"]} lines={tpsLines} base={768} amp={26} />
          </div>
          <div className={`${card} h-[134px]`}>
            <CardTitle>Response Time</CardTitle>
            <LineChart top={1126} labels={["8s", "4s", "0"]} lines={rtLines} base={1312} amp={5} />
          </div>
          <div className={`${card} h-10`} />
        </div>
        <div className="mt-[2px] h-[587px] w-[5px] rounded-full bg-[#b4b4b4]" />
      </div>
    </section>
  );
}

function Tooltip() {
  return (
    <div className="absolute left-[1251px] top-[154px] flex h-[98px] w-[88px] flex-col rounded-[3px] border border-[#ccc] bg-white/90 pl-[7px] pt-[6px] text-[9.200px] text-[#222] shadow-[0_1px_2px_rgba(0,0,0,0.300)]">
      <Mosaic cells={7} seed={63} tone="light" />
      <span className="leading-[11px] text-[#666]">Total</span>
      <span className="mt-[2px] text-[16.500px] leading-[20px]">25</span>
      <span className="mt-px leading-[12.300px]">normal <span className="ml-[2px] text-[#46a6fa]">19</span></span>
      <span className="leading-[12.300px]">slow <span className="ml-[2px] font-bold text-[#1a96fb]">5</span></span>
      <span className="leading-[12.300px]">verySlow <span className="ml-[2px] font-bold text-[#e8283c]">1</span></span>
    </div>
  );
}

export default function App() {
  return (
    <div className="relative h-[1314px] w-[2085px] overflow-hidden bg-white font-[Roboto,'Noto_Sans_CJK_KR',sans-serif]">
      <div className="flex items-start">
        <BackSidebar />
        <SliverLeft />
        <ContainerColumn />
        <TracePanel />
        <SliverRight />
      </div>
      <div className="absolute left-[420px] top-[504px] flex h-[776px] w-[1655px] bg-white shadow-[0_14px_24px_-2px_rgba(0,0,0,0.300)]">
        <FrontSidebar />
        <div className="flex w-[1500px] flex-col">
          <Toolbar />
          <div className="flex">
            <ContainerMap />
            <DetailPanel />
            <div className="ml-[2px] mt-px h-[700px] w-[5px] rounded-full bg-[#b4b4b4]" />
          </div>
        </div>
        <Tooltip />
      </div>
    </div>
  );
}
